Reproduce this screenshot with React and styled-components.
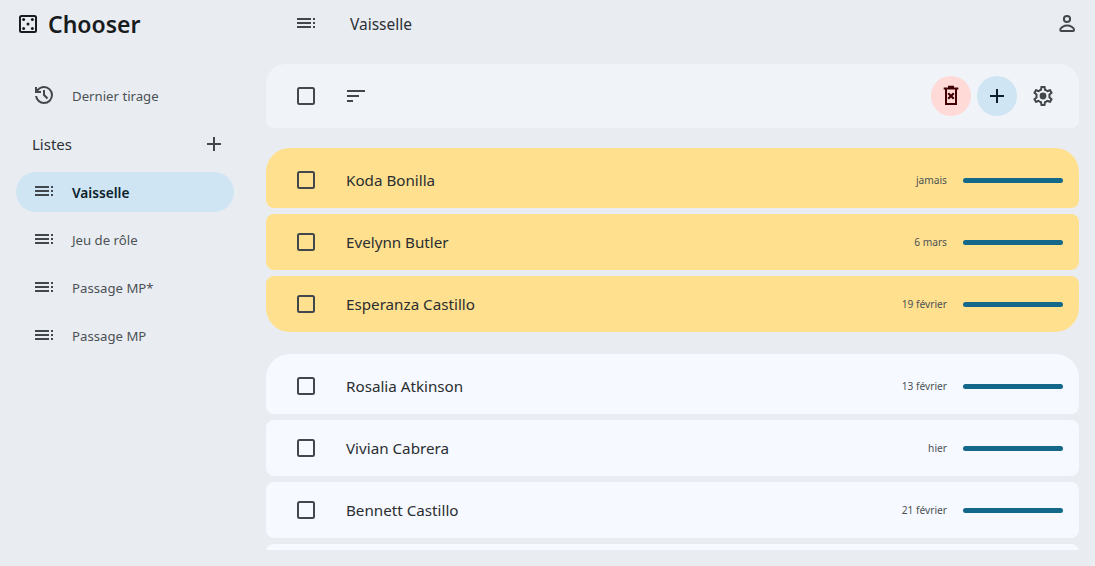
import React from 'react';
import styled, { createGlobalStyle } from 'styled-components';
import { MdAdd, MdSort } from 'react-icons/md';

const GlobalStyle = createGlobalStyle`
  html, body {
    margin: 0;
    height: 100%;
    background: #e9edf2;
    color: #191c1e;
    font-family: "Noto Sans", "Open Sans", sans-serif;
    overflow: hidden;
  }
`;

const Page = styled.div`
  display: flex;
  height: 566px;
`;

const Sidebar = styled.aside`
  width: 250px;
  flex: none;
  display: flex;
  flex-direction: column;
  padding: 0 16px;
  box-sizing: border-box;
`;

const Brand = styled.div`
  height: 48px;
  display: flex;
  align-items: center;
  gap: 8px;
  font-size: 23px;
  font-weight: 600;
  color: #191c1e;
`;

const NavItem = styled.div`
  height: 40px;
  margin-bottom: 8px;
  padding-left: 16px;
  display: flex;
  align-items: center;
  gap: 16px;
  border-radius: 20px;
  font-size: ${props => (props.$active ? '13.7px' : '13.2px')};
  font-weight: ${props => (props.$active ? 600 : 400)};
  color: ${props => (props.$active ? '#0c1f2b' : '#4c5155')};
  background: ${props => (props.$active ? '#cfe5f3' : 'transparent')};
  & svg {
    color: #42474c;
    flex: none;
  }
`;

const HistoryItem = styled(NavItem)`
  margin-top: 28px;
`;

const ListsHeader = styled.div`
  height: 40px;
  margin-bottom: 8px;
  padding-left: 16px;
  display: flex;
  align-items: center;
  justify-content: space-between;
  font-size: 15px;
  color: #2d3135;
`;

const Main = styled.main`
  flex: 1;
  min-width: 0;
  display: flex;
  flex-direction: column;
  padding: 0 16px 16px;
`;

const Header = styled.header`
  height: 48px;
  flex: none;
  margin-right: -8px;
  display: flex;
  align-items: center;
  padding-left: 28px;
  font-size: 15.5px;
  color: #2d3135;
  & > svg {
    color: #42474c;
  }
`;

const HeaderTitle = styled.span`
  flex: 1;
  margin-left: 32px;
`;

const Toolbar = styled.div`
  height: 64px;
  flex: none;
  margin-top: 16px;
  margin-bottom: 20px;
  padding: 0 16px 0 20px;
  box-sizing: border-box;
  display: flex;
  align-items: center;
  gap: 10px;
  background: #f0f3f8;
  border-radius: 20px 20px 8px 8px;
`;

const Spacer = styled.div`
  flex: 1;
`;

const IconButton = styled.button`
  width: 40px;
  height: 40px;
  flex: none;
  padding: 0;
  border: 0;
  border-radius: 50%;
  display: flex;
  align-items: center;
  justify-content: center;
  background: ${props => props.$bg || 'transparent'};
  color: ${props => props.$color || '#42474c'};
`;

const ActionGroup = styled.div`
  display: flex;
  gap: 6px;
`;

const Scroller = styled.div`
  flex: 1;
  min-height: 0;
  overflow: hidden;
`;

const Group = styled.section`
  display: flex;
  flex-direction: column;
  gap: 6px;
  margin-bottom: 22px;
`;

const Row = styled.div`
  height: 56px;
  flex: none;
  padding: 0 16px 0 20px;
  display: flex;
  align-items: center;
  background: ${props => (props.$due ? '#ffe08e' : '#f6f9ff')};
  border-radius: 8px;
  &:first-child {
    height: 60px;
    padding-top: 4px;
    box-sizing: border-box;
    border-top-left-radius: 24px;
    border-top-right-radius: 24px;
  }
  &:last-child {
    border-bottom-left-radius: 24px;
    border-bottom-right-radius: 24px;
  }
`;

const Name = styled.span`
  flex: 1;
  margin-left: 20px;
  font-size: 15.2px;
  color: #2a2e31;
`;

const LastDate = styled.span`
  font-size: 10.2px;
  color: #4c5155;
  margin-right: 16px;
`;

const Bar = styled.div`
  width: 100px;
  height: 5px;
  border-radius: 3px;
  background: #14688a;
`;

const TocIcon = () => (
  <svg width="24" height="24" viewBox="0 0 24 24" fill="currentColor">
    <path d="M3 6h14v2H3zM3 10h14v2H3zM3 14h14v2H3zM19 6h2v2h-2zM19 10h2v2h-2zM19 14h2v2h-2z" />
  </svg>
);

const BoxIcon = () => (
  <svg width="24" height="24" viewBox="0 0 24 24" fill="none" stroke="currentColor" strokeWidth="2">
    <rect x="4" y="4" width="16" height="16" rx="1.5" />
  </svg>
);

const DiceIcon = () => (
  <svg width="24" height="24" viewBox="0 0 24 24" fill="currentColor">
    <rect x="4" y="4" width="16" height="16" rx="1.5" fill="none" stroke="currentColor" strokeWidth="2" />
    <circle cx="7.6" cy="7.6" r="1.5" />
    <circle cx="16.4" cy="7.6" r="1.5" />
    <circle cx="12" cy="12" r="1.5" />
    <circle cx="7.6" cy="16.4" r="1.5" />
    <circle cx="16.4" cy="16.4" r="1.5" />
  </svg>
);

const HistoryIcon = () => (
  <svg width="24" height="24" viewBox="0 1 24 24" fill="currentColor">
    <path d="M12 21q-3.45 0-6.012-2.288T3.05 13H5.1q.35 2.6 2.313 4.3T12 19q2.925 0 4.963-2.037T19 12q0-2.925-2.037-4.963T12 5q-1.725 0-3.225.8T6.25 8H9v2H3V4h2v2.35q1.275-1.6 3.113-2.475T12 3q3.75 0 6.375 2.625T21 12q0 3.75-2.625 6.375T12 21Zm2.8-4.8L11 12.4V7h2v4.6l3.2 3.2-1.4 1.4Z" />
  </svg>
);

const PersonIcon = () => (
  <svg width="24" height="24" viewBox="0 0 24 24" fill="none" stroke="currentColor" strokeWidth="2">
    <circle cx="12" cy="7" r="3.1" />
    <path d="M5.3 17.6C5.3 15.4 9 13.6 12.2 13.6S19 15.4 19 17.6V18Q19 19 18 19H6.3Q5.3 19 5.3 18Z" />
  </svg>
);

const TrashIcon = () => (
  <svg width="24" height="24" viewBox="0 0 24 24" fill="none" stroke="currentColor" strokeWidth="2">
    <path d="M4.7 4.6h14.6M9 2.8h6M7 4.6V20h10V4.6" />
    <path strokeWidth="2.2" d="M9.2 9.2l5.6 5.6m0-5.6l-5.6 5.6" />
  </svg>
);

const GearIcon = () => (
  <svg width="24" height="24" viewBox="0 0 24 24" fill="currentColor">
    <path d="M19.43 12.98c.04-.32.07-.64.07-.98 0-.34-.03-.66-.07-.98l2.11-1.65c.19-.15.24-.42.12-.64l-2-3.46c-.09-.16-.26-.25-.44-.25-.06 0-.12.01-.17.03l-2.49 1c-.52-.4-1.08-.73-1.69-.98l-.38-2.65C14.46 2.18 14.25 2 14 2h-4c-.25 0-.46.18-.49.42l-.38 2.65c-.61.25-1.17.59-1.69.98l-2.49-1c-.06-.02-.12-.03-.18-.03-.17 0-.34.09-.43.25l-2 3.46c-.13.22-.07.49.12.64l2.11 1.65c-.04.32-.07.65-.07.98 0 .33.03.66.07.98l-2.11 1.65c-.19.15-.24.42-.12.64l2 3.46c.09.16.26.25.44.25.06 0 .12-.01.17-.03l2.49-1c.52.4 1.08.73 1.69.98l.38 2.65c.03.24.24.42.49.42h4c.25 0 .46-.18.49-.42l.38-2.65c.61-.25 1.17-.59 1.69-.98l2.49 1c.06.02.12.03.18.03.17 0 .34-.09.43-.25l2-3.46c.12-.22.07-.49-.12-.64l-2.11-1.65zm-1.98-1.71c.04.31.05.52.05.73 0 .21-.02.43-.05.73l-.14 1.13.89.7 1.08.84-.7 1.21-1.27-.51-1.04-.42-.9.68c-.43.32-.84.56-1.25.73l-1.06.43-.16 1.13-.2 1.35h-1.4l-.19-1.35-.16-1.13-1.06-.43c-.43-.18-.83-.41-1.23-.71l-.91-.7-1.06.43-1.27.51-.7-1.21 1.08-.84.89-.7-.14-1.13c-.03-.31-.05-.54-.05-.74s.02-.43.05-.73l.14-1.13-.89-.7-1.08-.84.7-1.21 1.27.51 1.04.42.9-.68c.43-.32.84-.56 1.25-.73l1.06-.43.16-1.13.2-1.35h1.39l.19 1.35.16 1.13 1.06.43c.43.18.83.41 1.23.71l.91.7 1.06-.43 1.27-.51.7 1.21-1.07.85-.89.7.14 1.13z" />
    <circle cx="12" cy="12" r="3.4" />
  </svg>
);

const lists = ['Jeu de rôle', 'Passage MP*', 'Passage MP'];

const dueRows = [
  { name: 'Koda Bonilla', date: 'jamais' },
  { name: 'Evelynn Butler', date: '6 mars' },
  { name: 'Esperanza Castillo', date: '19 février' },
];

const otherRows = [
  { name: 'Rosalia Atkinson', date: '13 février' },
  { name: 'Vivian Cabrera', date: 'hier' },
  { name: 'Bennett Castillo', date: '21 février' },
];

const Person = ({ name, date, due }) => (
  <Row $due={due}>
    <IconButton><BoxIcon /></IconButton>
    <Name>{name}</Name>
    <LastDate>{date}</LastDate>
    <Bar />
  </Row>
);

export default function App() {
  return (
    <Page>
      <GlobalStyle />
      <Sidebar>
        <Brand><DiceIcon />Chooser</Brand>
        <HistoryItem><HistoryIcon />Dernier tirage</HistoryItem>
        <ListsHeader>
          Listes
          <IconButton><MdAdd size={24} /></IconButton>
        </ListsHeader>
        <NavItem $active><TocIcon />Vaisselle</NavItem>
        {lists.map(name => <NavItem key={name}><TocIcon />{name}</NavItem>)}
      </Sidebar>
      <Main>
        <Header>
          <TocIcon />
          <HeaderTitle>Vaisselle</HeaderTitle>
          <IconButton><PersonIcon /></IconButton>
        </Header>
        <Toolbar>
          <IconButton><BoxIcon /></IconButton>
          <IconButton><MdSort size={24} /></IconButton>
          <Spacer />
          <ActionGroup>
            <IconButton $bg="#ffdad6" $color="#410002"><TrashIcon /></IconButton>
            <IconButton $bg="#cfe5f3" $color="#0c1f2b"><MdAdd size={24} /></IconButton>
            <IconButton><GearIcon /></IconButton>
          </ActionGroup>
        </Toolbar>
        <Scroller>
          <Group>{dueRows.map(r => <Person key={r.name} {...r} due />)}</Group>
          <Group>
            {otherRows.map(r => <Person key={r.name} {...r} />)}
            <Row />
          </Group>
        </Scroller>
      </Main>
    </Page>
  );
}
